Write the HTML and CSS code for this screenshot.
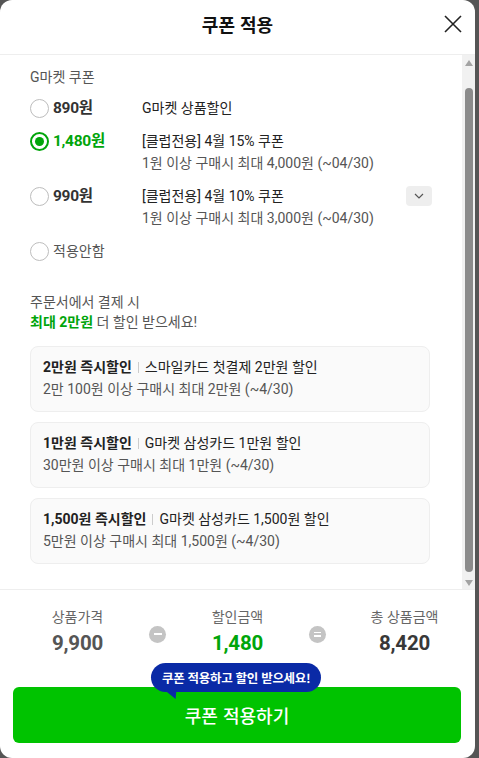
FILE: index.html
```html
<!DOCTYPE html>
<html lang="ko">
<head>
<meta charset="utf-8">
<title>쿠폰 적용</title>
<link rel="stylesheet" href="styles.css">
</head>
<body>
<div class="modal">
  <header class="head">
    <h1 class="title">쿠폰 적용</h1>
    <button class="close" aria-label="닫기">
      <svg width="18" height="18" viewBox="0 0 18 18"><path d="M1 1L17 17M17 1L1 17" stroke="#222" stroke-width="1.6" fill="none"/></svg>
    </button>
  </header>
  <div class="body">
    <div class="content">
      <div class="sec-title">G마켓 쿠폰</div>
      <ul class="coupons">
        <li class="coupon">
          <span class="radio"></span>
          <span class="price">890원</span>
          <div class="desc"><div class="name">G마켓 상품할인</div></div>
        </li>
        <li class="coupon on">
          <span class="radio"></span>
          <span class="price">1,480원</span>
          <div class="desc"><div class="name">[클럽전용] 4월 15% 쿠폰</div><div class="sub">1원 이상 구매시 최대 4,000원 (~04/30)</div></div>
        </li>
        <li class="coupon">
          <span class="radio"></span>
          <span class="price">990원</span>
          <div class="desc"><div class="name">[클럽전용] 4월 10% 쿠폰</div><div class="sub">1원 이상 구매시 최대 3,000원 (~04/30)</div></div>
          <button class="more" aria-label="더보기"><svg width="10" height="6" viewBox="0 0 10 6"><path d="M1 1L5 5L9 1" stroke="#555" stroke-width="1.2" fill="none"/></svg></button>
        </li>
        <li class="coupon">
          <span class="radio"></span>
          <span class="none">적용안함</span>
        </li>
      </ul>
      <div class="promo">
        <div class="promo-line">주문서에서 결제 시</div>
        <div class="promo-line"><strong class="green">최대 2만원</strong> 더 할인 받으세요!</div>
      </div>
      <div class="cards">
        <div class="card">
          <div class="card-top"><b>2만원 즉시할인</b><span class="bar"></span>스마일카드 첫결제 2만원 할인</div>
          <div class="card-sub">2만 100원 이상 구매시 최대 2만원 (~4/30)</div>
        </div>
        <div class="card">
          <div class="card-top"><b>1만원 즉시할인</b><span class="bar"></span>G마켓 삼성카드 1만원 할인</div>
          <div class="card-sub">30만원 이상 구매시 최대 1만원 (~4/30)</div>
        </div>
        <div class="card">
          <div class="card-top"><b>1,500원 즉시할인</b><span class="bar"></span>G마켓 삼성카드 1,500원 할인</div>
          <div class="card-sub">5만원 이상 구매시 최대 1,500원 (~4/30)</div>
        </div>
      </div>
    </div>
    <div class="scrollbar">
      <span class="arrow up"></span>
      <span class="thumb"></span>
      <span class="arrow down"></span>
    </div>
  </div>
  <footer class="foot">
    <div class="sum">
      <div class="col"><div class="lbl">상품가격</div><div class="val">9,900</div></div>
      <span class="op minus"></span>
      <div class="col"><div class="lbl">할인금액</div><div class="val green">1,480</div></div>
      <span class="op equal"></span>
      <div class="col last"><div class="lbl">총 상품금액</div><div class="val dark">8,420</div></div>
    </div>
    <div class="btn-wrap">
      <div class="tip">쿠폰 적용하고 할인 받으세요!</div>
      <button class="apply">쿠폰 적용하기</button>
    </div>
  </footer>
</div>
</body>
</html>
```
FILE: styles.css
```css
* { box-sizing: border-box; }
html, body { margin: 0; padding: 0; }
body {
  background: #555;
  font-family: Roboto, "Noto Sans CJK KR", sans-serif;
  color: #222;
  width: 479px;
  height: 758px;
  overflow: hidden;
}
.modal {
  width: 475px;
  height: 758px;
  background: #fff;
  border-radius: 12px;
  overflow: hidden;
  display: flex;
  flex-direction: column;
}
.head {
  height: 55px;
  flex: none;
  border-bottom: 1px solid #eee;
  display: flex;
  align-items: center;
  justify-content: center;
  position: relative;
}
.title {
  margin: 0 0 7px 0;
  font-size: 18px;
  font-weight: 700;
  color: #111;
  font-family: "Noto Sans CJK KR", sans-serif;
}
.close {
  position: absolute;
  right: 13px;
  top: 15px;
  background: none;
  border: 0;
  padding: 0;
  width: 18px;
  height: 18px;
  display: block;
}
.body {
  flex: none;
  height: 535px;
  display: flex;
  border-bottom: 1px solid #eee;
}
.content {
  flex: 1;
  padding: 11px 30px 0 30px;
  overflow: hidden;
}
.scrollbar {
  width: 13px;
  flex: none;
  background: #f1f1f1;
  display: flex;
  flex-direction: column;
  align-items: center;
  padding: 5px 0 3px;
}
.arrow {
  width: 0; height: 0;
  border-left: 4px solid transparent;
  border-right: 4px solid transparent;
}
.arrow.up { border-bottom: 6px solid #a3a3a3; }
.arrow.down { border-top: 6px solid #a3a3a3; }
.thumb {
  width: 8px;
  flex: 1;
  margin: 22px 0 8px;
  background: #8b8b8b;
  border-radius: 4px;
}
.sec-title {
  font-size: 14px;
  line-height: 22px;
  color: #555;
  margin-bottom: 9px;
}
.coupons {
  list-style: none;
  margin: 0;
  padding: 0;
  display: flex;
  flex-direction: column;
  gap: 11px;
}
.coupon {
  display: flex;
  align-items: flex-start;
  line-height: 22px;
  position: relative;
}
.radio {
  width: 19px;
  height: 19px;
  border: 1px solid #bdbdbd;
  border-radius: 50%;
  margin-top: 1.5px;
  flex: none;
  display: flex;
  align-items: center;
  justify-content: center;
}
.coupon.on .radio { border: 2px solid #00a50a; }
.coupon.on .radio::after {
  content: "";
  width: 9px; height: 9px;
  border-radius: 50%;
  background: #00a50a;
}
.price {
  width: 93px;
  padding-left: 4px;
  font-size: 15.5px;
  font-weight: 700;
  color: #333;
  flex: none;
  letter-spacing: -0.3px;
}
.coupon.on .price { color: #00a50a; }
.none {
  padding-left: 4px;
  font-size: 14px;
  color: #555;
}
.desc { font-size: 14px; }
.name { color: #222; }
.sub { color: #555; font-size: 14px; }
.more {
  position: absolute;
  right: 0;
  top: 1px;
  width: 26px;
  height: 20px;
  border: 0;
  border-radius: 4px;
  background: #eee;
  display: flex;
  align-items: center;
  justify-content: center;
  padding: 0;
}
.promo {
  margin-top: 30px;
  font-size: 14px;
  line-height: 20px;
  color: #555;
}
.green { color: #00a50a; }
.promo strong { font-weight: 700; }
.cards {
  margin-top: 14px;
  margin-right: 2px;
  display: flex;
  flex-direction: column;
  gap: 10px;
}
.card {
  background: #fafafa;
  border: 1px solid #eee;
  border-radius: 8px;
  padding: 9px 12px 11px;
  line-height: 22px;
  font-size: 14px;
}
.card-top { color: #222; display: flex; align-items: center; }
.card-top b { font-weight: 700; color: #222; }
.bar {
  width: 1px;
  height: 11px;
  background: #ccc;
  margin: 0 6px;
}
.card-sub { color: #555; }
.foot {
  flex: 1;
  padding-top: 17px;
}
.sum {
  display: grid;
  grid-template-columns: 143px 17px 143px 17px 143px;
  padding-left: 6px;
  align-items: center;
}
.col { text-align: center; }
.col.last { padding-left: 14px; }
.lbl { font-size: 14px; line-height: 20px; color: #666; }
.val {
  font-size: 20.5px;
  line-height: 28px;
  font-weight: 700;
  color: #555;
  margin-top: 2px;
  letter-spacing: -0.2px;
}
.val.green { color: #00a50a; }
.val.dark { color: #383838; }
.op {
  width: 17px;
  height: 17px;
  border-radius: 50%;
  background: #c4c4c4;
  position: relative;
  margin-top: 4px;
}
.op.minus::after {
  content: "";
  position: absolute;
  left: 4.5px; top: 7.5px;
  width: 8px; height: 2px;
  background: #fff;
}
.op.equal::before, .op.equal::after {
  content: "";
  position: absolute;
  left: 5px;
  width: 7px; height: 1.5px;
  background: #fff;
}
.op.equal::before { top: 6px; }
.op.equal::after { top: 9.5px; }
.btn-wrap {
  position: relative;
  margin: 30px 14px 0 13px;
}
.apply {
  width: 100%;
  height: 56px;
  border: 0;
  border-radius: 6px;
  background: #00c300;
  color: #fff;
  font-family: "Noto Sans CJK KR", sans-serif;
  font-size: 18px;
  font-weight: 500;
  padding: 0;
  display: block;
}
.tip {
  position: absolute;
  left: 138px;
  top: -24px;
  height: 29px;
  padding: 0 11px;
  border-radius: 15px;
  background: #0a2aa6;
  color: #fff;
  font-family: "Noto Sans CJK KR", sans-serif;
  font-size: 12.5px;
  font-weight: 700;
  line-height: 29px;
  letter-spacing: -0.3px;
  white-space: nowrap;
  z-index: 1;
}
.tip::after {
  content: "";
  position: absolute;
  left: 16px;
  bottom: -7px;
  width: 0; height: 0;
  border-left: 6px solid transparent;
  border-right: 6px solid transparent;
  border-top: 9px solid #0a2aa6;
  transform: skewX(30deg);
}
```
